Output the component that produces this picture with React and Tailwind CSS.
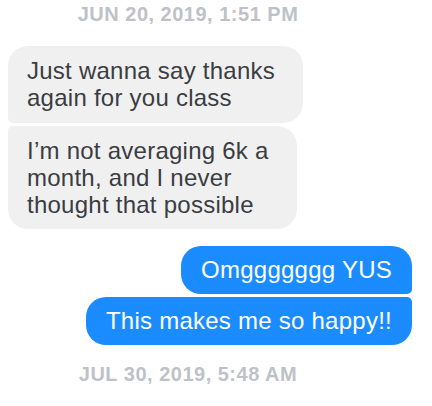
const font = { fontFamily: '"Liberation Sans", Arial, sans-serif' };

function DateLabel({ text, className }) {
  return (
    <div className={`pr-[56px] text-center text-[20px] leading-[24px] font-bold tracking-[0.5px] text-[#bec2c8] ${className}`}>
      {text}
    </div>
  );
}

function Incoming({ lines, corners, pad }) {
  return (
    <div
      className={`w-fit ml-2 bg-[#f0f0f0] text-[#3a3d42] text-[24px] leading-[27px] tracking-[0.25px] pl-[19px] pr-[28px] ${pad} ${corners}`}>
      {lines.map((line, i) => (
        <div key={i}>{line}</div>
      ))}
    </div>
  );
}

function Outgoing({ text, corners }) {
  return (
    <div
      className={`w-fit self-end mr-5 bg-[#1a8cff] text-white text-[24px] leading-[27px] tracking-[0.25px] px-[20px] pt-[10px] pb-[11px] ${corners}`}>
      {text}
    </div>
  );
}

export default function App() {
  return (
    <div style={font} className="w-[432px] h-[406px] bg-white overflow-hidden flex flex-col pt-[2px]">
      <DateLabel text="JUN 20, 2019, 1:51 PM" />

      {/* incoming group */}
      <div className="mt-5 flex flex-col gap-[3px]">
        <Incoming
          lines={["Just wanna say thanks", "again for you class"]}
          corners="rounded-[20px] rounded-bl-[5px]"
          pad="pt-[11px] pb-[12px]"
        />
        <Incoming
          lines={["I’m not averaging 6k a", "month, and I never", "thought that possible"]}
          corners="rounded-[20px] rounded-tl-[5px]"
          pad="py-[11px]"
        />
      </div>

      {/* outgoing group */}
      <div className="mt-[17px] flex flex-col gap-[3px]">
        <Outgoing text="Omggggggg YUS" corners="rounded-[20px] rounded-br-[5px]" />
        <Outgoing text="This makes me so happy!!" corners="rounded-[20px] rounded-tr-[5px]" />
      </div>

      <DateLabel text="JUL 30, 2019, 5:48 AM" className="mt-[17px]" />
    </div>
  );
}
